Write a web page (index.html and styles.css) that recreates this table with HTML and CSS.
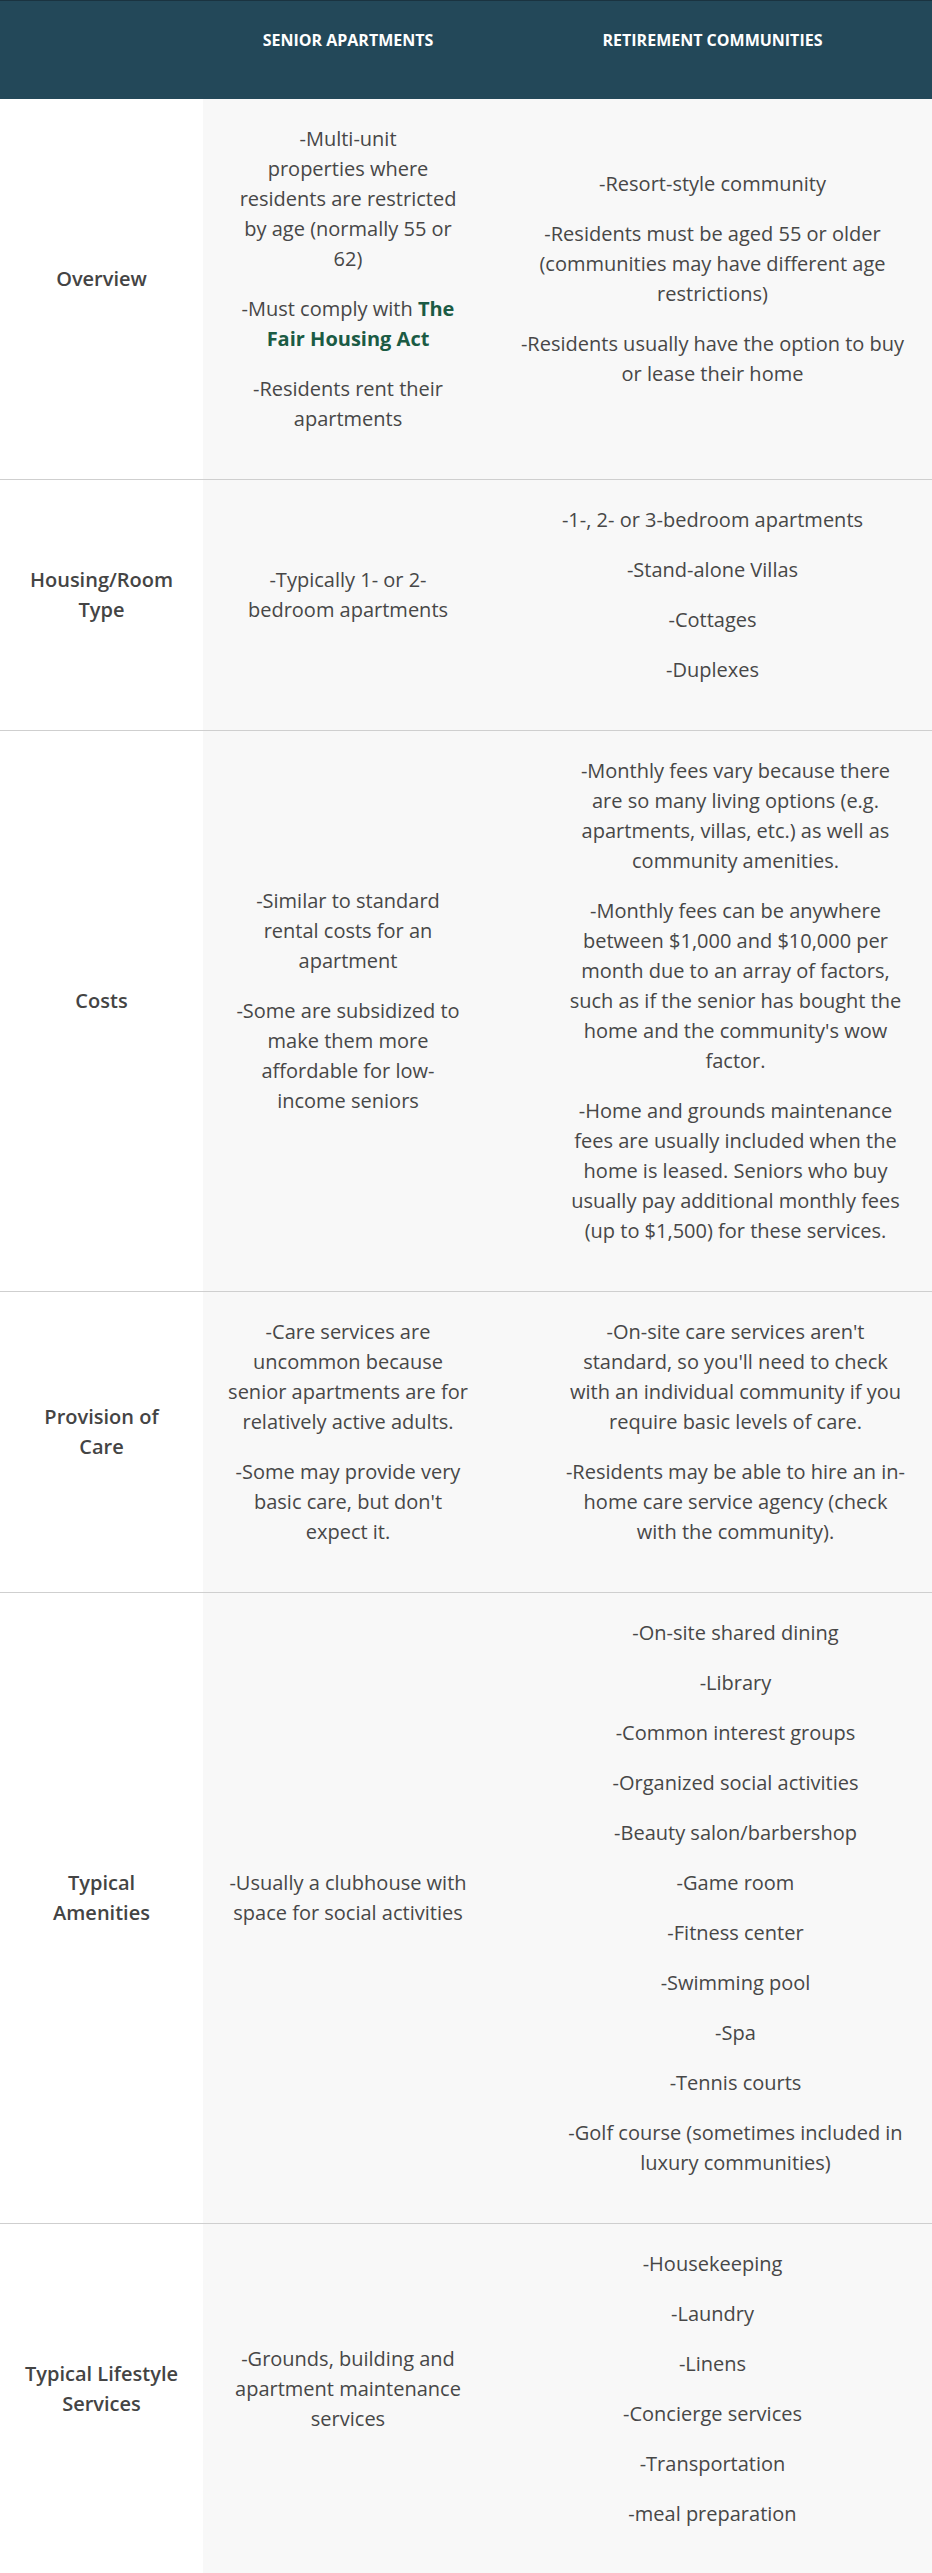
FILE: index.html
```html
<!DOCTYPE html>
<html lang="en">
<head>
<meta charset="utf-8">
<title>Senior Apartments vs Retirement Communities</title>
<link rel="stylesheet" href="styles.css">
</head>
<body>
<table class="compare">
  <colgroup>
    <col class="col-label">
    <col class="col-a">
    <col class="col-b">
  </colgroup>
  <thead>
    <tr>
      <th></th>
      <th>Senior Apartments</th>
      <th>Retirement Communities</th>
    </tr>
  </thead>
  <tbody>
    <tr>
      <td class="label"><p>Overview</p></td>
      <td>
        <p>-Multi-unit<br>properties where residents are restricted by age (normally 55 or 62)</p>
        <p>-Must comply with <a class="link" href="#">The Fair Housing Act</a></p>
        <p>-Residents rent their apartments</p>
      </td>
      <td>
        <p>-Resort-style community</p>
        <p>-Residents must be aged 55 or older (communities may have different age restrictions)</p>
        <p>-Residents usually have the option to buy or lease their home</p>
      </td>
    </tr>
    <tr>
      <td class="label"><p>Housing/Room Type</p></td>
      <td>
        <p>-Typically 1- or 2-bedroom apartments</p>
      </td>
      <td>
        <p>-1-, 2- or 3-bedroom apartments</p>
        <p>-Stand-alone Villas</p>
        <p>-Cottages</p>
        <p>-Duplexes</p>
      </td>
    </tr>
    <tr>
      <td class="label"><p>Costs</p></td>
      <td>
        <p>-Similar to standard rental costs for an apartment</p>
        <p>-Some are subsidized to make them more affordable for low-income seniors</p>
      </td>
      <td class="inset">
        <p>-Monthly fees vary because there are so many living options (e.g. apartments, villas, etc.) as well as community amenities.</p>
        <p>-Monthly fees can be anywhere between $1,000 and $10,000 per month due to an array of factors, such as if the senior has bought the home and the community's wow factor.</p>
        <p>-Home and grounds maintenance fees are usually included when the home is leased. Seniors who buy usually pay additional monthly fees (up to $1,500) for these services.</p>
      </td>
    </tr>
    <tr>
      <td class="label"><p>Provision of Care</p></td>
      <td>
        <p>-Care services are uncommon because senior apartments are for relatively active adults.</p>
        <p>-Some may provide very basic care, but don't expect it.</p>
      </td>
      <td class="inset">
        <p>-On-site care services aren't standard, so you'll need to check with an individual community if you require basic levels of care.</p>
        <p>-Residents may be able to hire an in-home care service agency (check with the community).</p>
      </td>
    </tr>
    <tr>
      <td class="label"><p>Typical Amenities</p></td>
      <td>
        <p>-Usually a clubhouse with space for social activities</p>
      </td>
      <td class="inset">
        <p>-On-site shared dining</p>
        <p>-Library</p>
        <p>-Common interest groups</p>
        <p>-Organized social activities</p>
        <p>-Beauty salon/barbershop</p>
        <p>-Game room</p>
        <p>-Fitness center</p>
        <p>-Swimming pool</p>
        <p>-Spa</p>
        <p>-Tennis courts</p>
        <p>-Golf course (sometimes included in luxury communities)</p>
      </td>
    </tr>
    <tr>
      <td class="label"><p>Typical Lifestyle Services</p></td>
      <td>
        <p>-Grounds, building and apartment maintenance services</p>
      </td>
      <td>
        <p>-Housekeeping</p>
        <p>-Laundry</p>
        <p>-Linens</p>
        <p>-Concierge services</p>
        <p>-Transportation</p>
        <p>-meal preparation</p>
      </td>
    </tr>
  </tbody>
</table>
</body>
</html>
```
FILE: styles.css
```css
html, body {
  margin: 0;
  padding: 0;
  background: #ffffff;
}

body {
  font-family: "Open Sans", "Noto Sans", "Liberation Sans", sans-serif;
  font-size: 20px;
  line-height: 30px;
  color: #474747;
}

.compare {
  width: 932px;
  border-collapse: collapse;
  table-layout: fixed;
}

.col-label { width: 203px; }
.col-a { width: 290px; }
.col-b { width: 439px; }

.compare th {
  background: #234859;
  color: #ffffff;
  font-size: 16px;
  font-weight: 700;
  line-height: 30px;
  text-transform: uppercase;
  text-align: center;
  vertical-align: top;
  padding: 24px 25px 44px;
  border-top: 1px solid #1a3340;
}

.compare td {
  text-align: center;
  vertical-align: middle;
  padding: 25px 25px;
  background: #f8f8f8;
  border-bottom: 1px solid #cfcfcf;
}

.compare td.label {
  background: #ffffff;
  font-weight: 600;
  color: #444444;
  padding-left: 22px;
  padding-right: 22px;
}

.compare td.inset {
  padding-left: 71px;
}

.compare p {
  margin: 0 0 20px;
}

.link {
  color: #1b5b44;
  font-weight: 700;
  text-decoration: none;
}
```
